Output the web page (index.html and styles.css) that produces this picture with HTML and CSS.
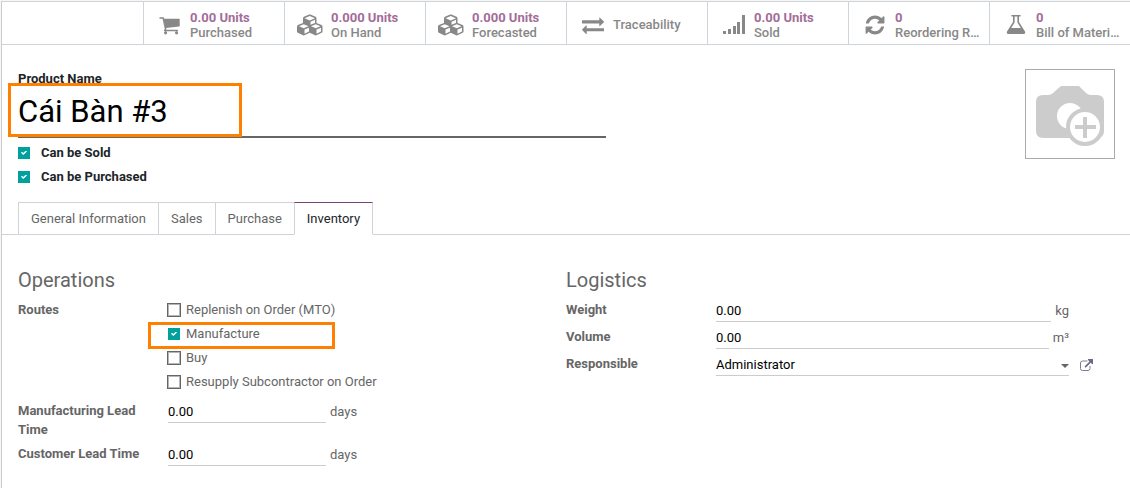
FILE: index.html
```
<!DOCTYPE html>
<html lang="vi">
<head>
    <meta charset="UTF-8">
    <meta name="viewport" content="width=device-width, initial-scale=1.0">
    <title>Cái Bàn #3</title>
    <link rel="stylesheet" href="styles.css">
</head>
<body>
    <main class="sheet">
        <div class="stats">
            <button type="button" class="stat">
                <span class="stat-icon"><svg width="21" height="22" viewBox="0 0 1664 1792"><path d="M640 1536q0 52-38 90t-90 38-90-38-38-90 38-90 90-38 90 38 38 90zm896 0q0 52-38 90t-90 38-90-38-38-90 38-90 90-38 90 38 38 90zm128-1088v512q0 24-16.500 42.500t-40.500 21.500l-1044 122q13 60 13 70 0 16-24 64h920q26 0 45 19t19 45-19 45-45 19h-1024q-26 0-45-19t-19-45q0-11 8-31.500t16-36 21.500-40 15.500-29.500l-177-823h-204q-26 0-45-19t-19-45 19-45 45-19h256q16 0 28.500 6.500t19.500 15.500 13 24.500 8 26 5.500 29.500 4.500 26h1201q26 0 45 19t19 45z"/></svg></span>
                <span class="stat-text"><b>0.00 Units</b>Purchased</span>
            </button>
            <button type="button" class="stat">
                <span class="stat-icon"><svg width="27" height="22" viewBox="0 0 2304 1792"><path d="M640 1632l384-192v-314l-384 164v342zm-64-454l404-173-404-173-404 173zm1088 454l384-192v-314l-384 164v342zm-64-454l404-173-404-173-404 173zm-448-293l384-165v-266l-384 164v267zm-64-379l441-189-441-189-441 189zm1088 518v416q0 36-19 67t-52 47l-448 224q-25 14-57 14t-57-14l-448-224q-4-2-7-4-2 2-7 4l-448 224q-25 14-57 14t-57-14l-448-224q-33-16-52-47t-19-67v-416q0-38 21.500-70t56.500-48l434-186v-400q0-38 21.500-70t56.500-48l448-192q23-10 50-10t50 10l448 192q35 16 56.500 48t21.500 70v400l434 186q36 16 57 48t21 70z"/></svg></span>
                <span class="stat-text"><b>0.000 Units</b>On Hand</span>
            </button>
            <button type="button" class="stat">
                <span class="stat-icon"><svg width="27" height="22" viewBox="0 0 2304 1792"><path d="M640 1632l384-192v-314l-384 164v342zm-64-454l404-173-404-173-404 173zm1088 454l384-192v-314l-384 164v342zm-64-454l404-173-404-173-404 173zm-448-293l384-165v-266l-384 164v267zm-64-379l441-189-441-189-441 189zm1088 518v416q0 36-19 67t-52 47l-448 224q-25 14-57 14t-57-14l-448-224q-4-2-7-4-2 2-7 4l-448 224q-25 14-57 14t-57-14l-448-224q-33-16-52-47t-19-67v-416q0-38 21.500-70t56.500-48l434-186v-400q0-38 21.500-70t56.500-48l448-192q23-10 50-10t50 10l448 192q35 16 56.500 48t21.500 70v400l434 186q36 16 57 48t21 70z"/></svg></span>
                <span class="stat-text"><b>0.000 Units</b>Forecasted</span>
            </button>
            <button type="button" class="stat">
                <span class="stat-icon"><svg width="22" height="22" viewBox="0 0 1792 1792"><path d="M1792 1184v192q0 13-9.500 22.500t-22.500 9.500h-1376v192q0 13-9.500 22.500t-22.500 9.500q-12 0-24-10l-319-320q-9-9-9-22 0-14 9-23l320-320q9-9 23-9 13 0 22.500 9.500t9.500 22.500v192h1376q13 0 22.500 9.500t9.500 22.500zm0-544q0 14-9 23l-320 320q-9 9-23 9-13 0-22.500-9.500t-9.500-22.500v-192h-1376q-13 0-22.500-9.500t-9.500-22.500v-192q0-13 9.500-22.500t22.500-9.500h1376v-192q0-14 9-23t23-9q12 0 24 10l319 319q9 9 9 23z"/></svg></span>
                <span class="stat-text">Traceability</span>
            </button>
            <button type="button" class="stat">
                <span class="stat-icon"><svg width="22" height="22" viewBox="0 0 22 22"><path d="M0 17h3v3h-3zM5 15h3v5h-3zM10 12h3v8h-3zM14 8h3v12h-3zM19 1h3v19h-3z"/></svg></span>
                <span class="stat-text"><b>0.00 Units</b>Sold</span>
            </button>
            <button type="button" class="stat">
                <span class="stat-icon"><svg width="22" height="22" viewBox="0 0 1792 1792"><path d="M1639 1056q0 5-1 7-64 268-268 434.500t-478 166.500q-146 0-282.500-55t-243.500-157l-129 129q-19 19-45 19t-45-19-19-45v-448q0-26 19-45t45-19h448q26 0 45 19t19 45-19 45l-137 137q71 66 161 102t187 36q134 0 250-65t186-179q11-17 53-117 8-23 30-23h192q13 0 22.500 9.500t9.500 22.500zm25-800v448q0 26-19 45t-45 19h-448q-26 0-45-19t-19-45 19-45l138-138q-148-137-349-137-134 0-250 65t-186 179q-11 17-53 117-8 23-30 23h-199q-13 0-22.500-9.500t-9.500-22.500v-7q65-268 270-434.500t480-166.500q146 0 284 55.500t245 156.500l130-129q19-19 45-19t45 19 19 45z"/></svg></span>
                <span class="stat-text"><b>0</b>Reordering Rules</span>
            </button>
            <button type="button" class="stat">
                <span class="stat-icon"><svg width="20" height="22" viewBox="0 0 20 22"><path d="M6 1h8a.8.8 0 0 1 0 1.600h-1v5.400l5.700 9c1.100 1.700.3 3-1.700 3h-14c-2 0-2.800-1.300-1.700-3l5.700-9v-5.400h-1a.8.8 0 0 1 0-1.600zM8.600 2.600v5.900l-3.400 5.500h9.600l-3.400-5.500v-5.900z" fill-rule="evenodd"/></svg></span>
                <span class="stat-text"><b>0</b>Bill of Materials</span>
            </button>
        </div>

        <div class="head">
            <div class="title">
                <label for="name">Product Name</label>
                <div class="title-field">
                    <input type="text" id="name" value="Cái Bàn #3">
                    <span class="mark mark-title"></span>
                </div>
                <label class="option"><input type="checkbox" class="check" checked>Can be Sold</label>
                <label class="option"><input type="checkbox" class="check" checked>Can be Purchased</label>
            </div>
            <button type="button" class="photo" aria-label="Photo">
                <svg width="88" height="88" viewBox="0 0 88 88">
                    <path fill="#ccc" d="M17 25h5q3 0 5-2l8-7h18l7 7q2 2 5 2h6q7 0 7 7v29q0 7-7 7h-54q-7 0-7-7v-29q0-7 7-7z"/>
                    <circle cx="44" cy="46" r="13" fill="#fff"/>
                    <circle cx="59" cy="57" r="17" fill="#fff" stroke="#ccc" stroke-width="4"/>
                    <path stroke="#ccc" stroke-width="4" d="M49 57h21M59 47v21"/>
                </svg>
            </button>
        </div>

        <div class="tabs">
            <button type="button" class="tab">General Information</button>
            <button type="button" class="tab">Sales</button>
            <button type="button" class="tab">Purchase</button>
            <button type="button" class="tab active">Inventory</button>
        </div>

        <div class="groups">
            <section class="group">
                <h2>Operations</h2>
                <div class="row">
                    <span class="name">Routes</span>
                    <div class="routes">
                        <label class="option"><input type="checkbox" class="check">Replenish on Order (MTO)</label>
                        <label class="option"><input type="checkbox" class="check" checked>Manufacture<span class="mark mark-route"></span></label>
                        <label class="option"><input type="checkbox" class="check">Buy</label>
                        <label class="option"><input type="checkbox" class="check">Resupply Subcontractor on Order</label>
                    </div>
                </div>
                <div class="row">
                    <label class="name" for="lead">Manufacturing Lead Time</label>
                    <div class="field"><input type="text" class="short" id="lead" value="0.00"><span>days</span></div>
                </div>
                <div class="row">
                    <label class="name" for="customer">Customer Lead Time</label>
                    <div class="field"><input type="text" class="short" id="customer" value="0.00"><span>days</span></div>
                </div>
            </section>
            <section class="group">
                <h2>Logistics</h2>
                <div class="row">
                    <label class="name" for="weight">Weight</label>
                    <div class="field"><input type="text" id="weight" value="0.00"><span>kg</span></div>
                </div>
                <div class="row">
                    <label class="name" for="volume">Volume</label>
                    <div class="field"><input type="text" id="volume" value="0.00"><span>m³</span></div>
                </div>
                <div class="row">
                    <label class="name" for="user">Responsible</label>
                    <div class="field">
                        <select id="user"><option>Administrator</option></select>
                        <svg class="caret" width="8" height="4" viewBox="0 0 8 4"><path d="M0 0h8l-4 4z"/></svg>
                    </div>
                    <a href="#" class="external" aria-label="External link">
                        <svg width="14" height="12" viewBox="0 0 14 12"><path d="M7.500 2h-5q-2 0-2 2v5.500q0 2 2 2h5.500q2 0 2-2v-2.500" fill="none" stroke="#7c7b9a"/><path d="M4.500 7.500l5-5-1.500-1.500q-.5-1 .5-1h4.500v4.500q0 1-1 .5l-1.300-1.300-5 5z" fill="#6c6a83"/></svg>
                    </a>
                </div>
            </section>
        </div>
    </main>
</body>
</html>
```
FILE: styles.css
```
* {
    box-sizing: border-box;
}

body {
    margin: 0;
    padding: 1px 0 0 1px;
    background-color: #f6f6f6;
    color: #666;
    font-family: Roboto, "Noto Sans", sans-serif;
    font-size: 13px;
    line-height: 19px;
}

button, input, select {
    margin: 0;
    padding: 0;
    border: 0;
    border-radius: 0;
    background: none;
    font: inherit;
    color: inherit;
}

svg {
    display: block;
}

.sheet {
    min-height: calc(100vh - 1px);
    background-color: #fff;
    border-left: 1px solid #ccc;
}

/* stat buttons */
.stats {
    display: flex;
    justify-content: flex-end;
    border-top: 1px solid #ced4da;
    border-bottom: 1px solid #ced4da;
}

.stat {
    display: flex;
    align-items: center;
    flex: 0 0 141px;
    min-width: 0;
    height: 42px;
    padding: 3px 8px 0 5px;
    border-left: 1px solid #ced4da;
    color: #888;
    font-weight: 500;
    line-height: 15px;
    text-align: left;
}

.stat-icon {
    display: flex;
    justify-content: center;
    flex: 0 0 41px;
    fill: #888;
}

.stat-text {
    min-width: 0;
    overflow: hidden;
    text-overflow: ellipsis;
    white-space: nowrap;
}

.stat-text b {
    display: block;
    color: #a26d98;
}

/* product name and photo */
.head {
    display: flex;
    justify-content: space-between;
    align-items: flex-start;
    padding: 24px 15px 11px 16px;
}

.title {
    flex: 0 1 588px;
    color: #212529;
    font-weight: bold;
}

.title > label {
    display: block;
}

.title-field {
    position: relative;
    margin-bottom: 5px;
}

.title-field input {
    display: block;
    width: 100%;
    height: 50px;
    padding-bottom: 1px;
    border-bottom: 2px solid #666;
    color: #000;
    font-size: 31px;
    font-weight: normal;
}

.title > .option {
    display: flex;
    gap: 11px;
}

.photo {
    border: 1px solid #aaa;
}

.option {
    position: relative;
    display: flex;
    align-items: center;
    gap: 6px;
    height: 19px;
    margin-bottom: 5px;
}

.check {
    appearance: none;
    width: 12px;
    height: 12px;
    border: 1px solid #b4b4bb;
    outline: 1px solid #666;
}

.check:checked {
    border: 0;
    outline: 0;
    background-color: #00a09d;
}

.check:checked::before {
    content: "";
    display: block;
    width: 6px;
    height: 5px;
    margin: 4px 3px;
    background-color: #fff;
    clip-path: polygon(0 45%, 18% 25%, 38% 50%, 82% 0, 100% 20%, 38% 90%);
}

/* orange frames over the form */
.mark {
    position: absolute;
    border: 3px solid #ff8000;
    pointer-events: none;
}

.mark-title {
    top: -5px;
    left: -10px;
    width: 234px;
    height: 54px;
}

.mark-route {
    top: -2px;
    left: -20px;
    width: 187px;
    height: 27px;
}

/* tabs */
.tabs {
    display: flex;
    padding-left: 16px;
    box-shadow: inset 0 -1px #ced4da;
}

.tab {
    height: 33px;
    padding: 0 12px;
    border: 1px solid #ced4da;
    border-right: 0;
}

.tab.active {
    border-top-color: #7c4075;
    border-right: 1px solid #ced4da;
    border-bottom-color: #fff;
    color: #212529;
}

/* field groups */
.groups {
    display: grid;
    grid-template-columns: 1fr 1fr;
    padding: 33px 16px 16px;
}

h2 {
    margin: 0 0 8px;
    font-size: 20px;
    font-weight: normal;
    line-height: 24px;
}

.row {
    display: grid;
    grid-template-columns: 150px 1fr 45px;
    margin-bottom: 5px;
}

.name {
    padding-right: 16px;
    font-weight: bold;
}

.field {
    position: relative;
    display: flex;
    align-items: center;
    gap: 4px;
    height: 22px;
    line-height: 20px;
}

.field input, .field select {
    flex: 1;
    min-width: 0;
    height: 22px;
    border-bottom: 1px solid #ccc;
    color: #000;
}

.field select {
    appearance: none;
}

.field .short {
    flex: 0 1 158px;
}

.caret {
    position: absolute;
    right: 0;
    top: 10px;
    fill: #666;
    pointer-events: none;
}

.external {
    align-self: center;
    padding-left: 11px;
}
```
